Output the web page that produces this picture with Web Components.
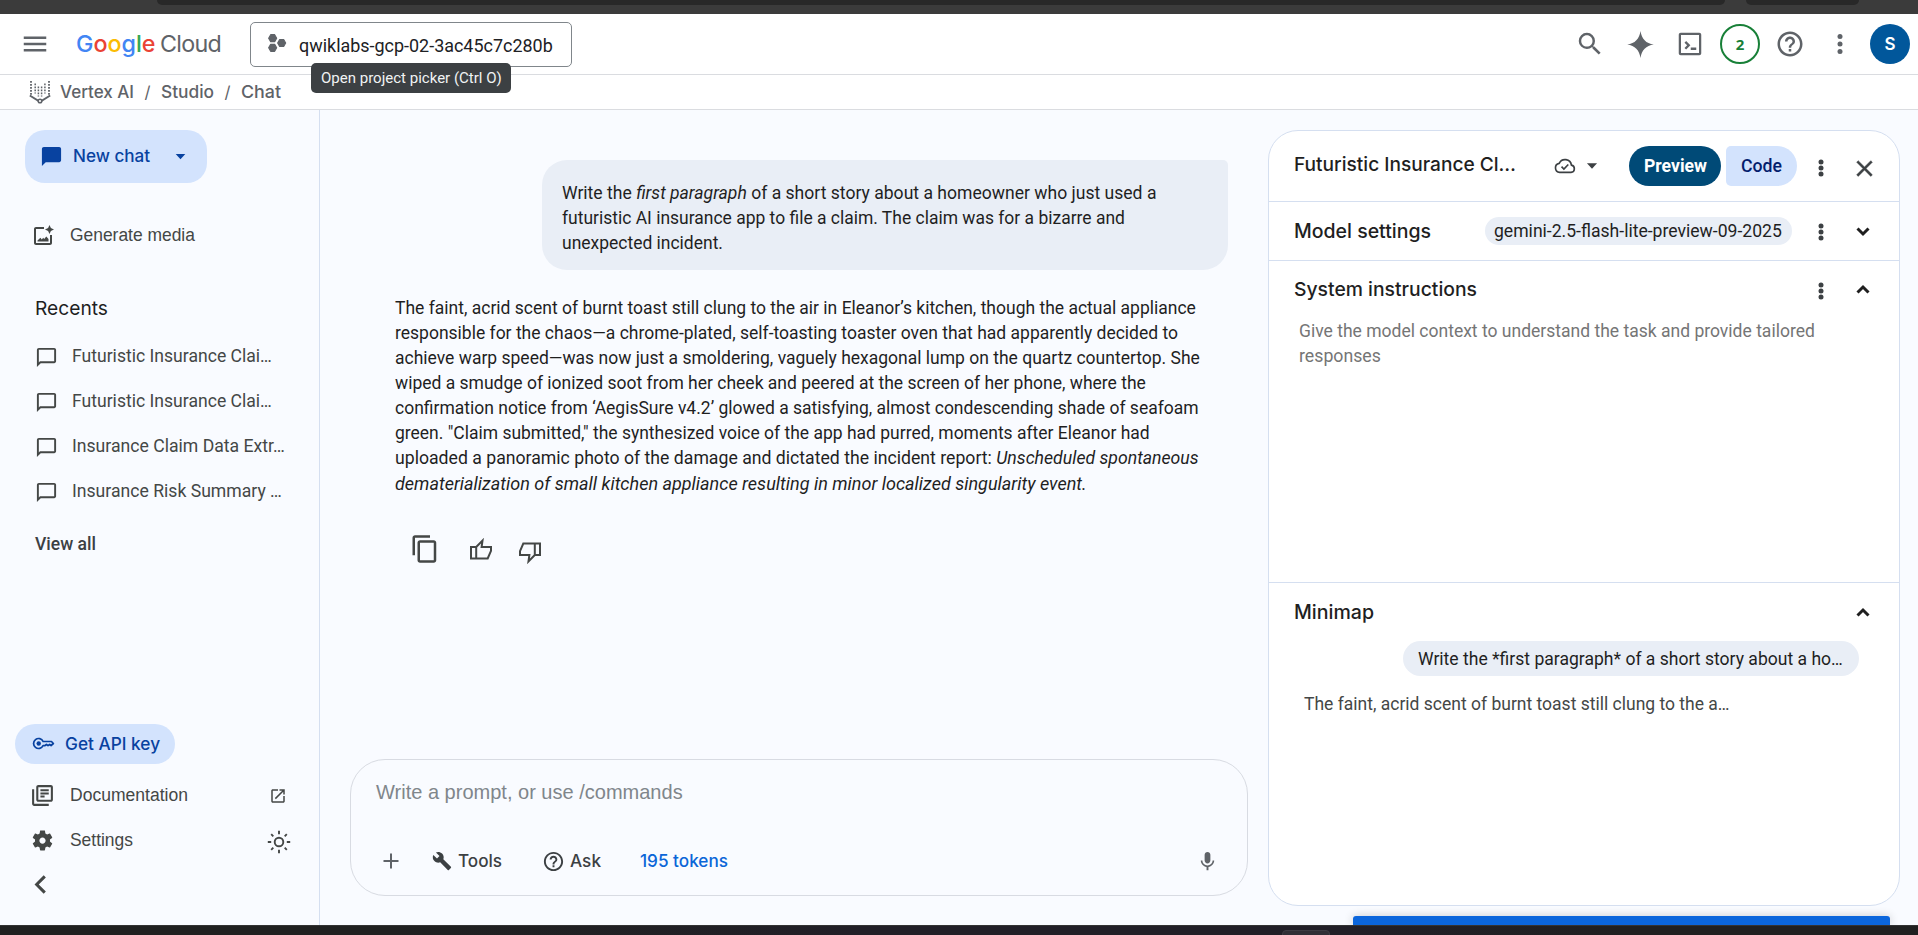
<!DOCTYPE html>
<html lang="en">
<head>
<meta charset="utf-8">
<title>Vertex AI Studio</title>
<style>
html,body{margin:0;height:100%;overflow:hidden;background:#f9fbff}
body{font-family:Roboto,sans-serif;font-size:17.5px;color:#1f1f1f}
</style>
</head>
<body>
<studio-app></studio-app>
<script>
const ICONS = {
menu:'<path d="M3 18h18v-2H3v2zm0-5h18v-2H3v2zm0-7v2h18V6H3z"/>',
search:'<path d="M15.5 14h-.79l-.28-.27A6.47 6.47 0 0 0 16 9.5 6.5 6.5 0 1 0 9.5 16c1.61 0 3.09-.59 4.23-1.57l.27.28v.79l5 4.99L20.49 19l-4.99-5zm-6 0C7.01 14 5 11.99 5 9.5S7.01 5 9.5 5 14 7.01 14 9.5 11.99 14 9.5 14z"/>',
help:'<path d="M11 18h2v-2h-2v2zm1-16C6.48 2 2 6.48 2 12s4.48 10 10 10 10-4.48 10-10S17.52 2 12 2zm0 18c-4.41 0-8-3.59-8-8s3.59-8 8-8 8 3.59 8 8-3.59 8-8 8zm0-14c-2.21 0-4 1.79-4 4h2c0-1.1.9-2 2-2s2 .9 2 2c0 2-3 1.75-3 5h2c0-2.25 3-2.5 3-5 0-2.21-1.79-4-4-4z"/>',
more:'<circle cx="12" cy="6" r="2"/><circle cx="12" cy="12" r="2"/><circle cx="12" cy="18" r="2"/>',
moreBold:'<circle cx="12" cy="5.9" r="2.5"/><circle cx="12" cy="12" r="2.5"/><circle cx="12" cy="18.1" r="2.5"/>',
spark:'<path d="M12 .8C12.9 7.4 16.6 11.1 23 12 16.6 12.9 12.9 16.6 12 23.2 11.1 16.6 7.4 12.9 1 12 7.4 11.1 11.1 7.4 12 .8z"/>',
shell:'<path fill-rule="evenodd" d="M4.6 3h14.8c.9 0 1.6.7 1.6 1.6v14.8c0 .9-.7 1.6-1.6 1.6H4.6c-.9 0-1.6-.7-1.6-1.6V4.6C3 3.7 3.7 3 4.6 3zM4.8 4.8v14.4h14.4V4.8zM7.6 10.9 9.7 13l-2.1 2.1 1.3 1.3 3.400-3.400-3.400-3.400zM12.600 14.800h4.400v1.900h-4.400z"/>',
chat:'<path d="M20 2H4c-1.1 0-2 .9-2 2v18l4-4h14c1.1 0 2-.9 2-2V4c0-1.1-.9-2-2-2z"/>',
chatOut:'<path d="M4 4h16v12H5.17L4 17.17V4m0-2c-1.1 0-2 .9-2 2v18l4-4h14c1.1 0 2-.9 2-2V4c0-1.1-.9-2-2-2H4z"/>',
down:'<path d="M6.5 9h11L12 15z"/>',
media:'<path d="M13 3H5c-1.1 0-2 .9-2 2v14c0 1.1.9 2 2 2h14c1.1 0 2-.9 2-2v-8h-2v8H5V5h8zM6.5 17.5h11V15l-2.2-2.6-2.1 2.6-1-1.2-1.4 1.7-1.4-1.7-2.9 2.7zM18.5 1l1.4 3.1L23 5.500l-3.100 1.400L18.500 10l-1.400-3.100L14 5.500l3.100-1.400z"/>',
key:'<g fill="none" stroke="currentColor" stroke-width="1.8"><path d="M11.600 9.900A5.200 5.200 0 1 0 11.600 14.100H13.600L15.100 13l1.600 1.200 1.700-1.200 1.500 1.100L22.300 12 20.300 9.900z" stroke-linejoin="round"/></g><circle cx="7" cy="12" r="2.300"/>',
docs:'<path d="M4 6H2v14c0 1.100.900 2 2 2h14v-2H4V6zm16-4H8c-1.100 0-2 .900-2 2v12c0 1.100.900 2 2 2h12c1.100 0 2-.900 2-2V4c0-1.100-.900-2-2-2zm0 14H8V4h12v12zM10 9h8v2h-8zm0 3h4v2h-4zm0-6h8v2h-8z"/>',
open:'<path d="M19 19H5V5h7V3H5c-1.110 0-2 .900-2 2v14c0 1.100.890 2 2 2h14c1.100 0 2-.900 2-2v-7h-2v7zM14 3v2h3.590l-9.830 9.830 1.410 1.410L19 6.410V10h2V3h-7z"/>',
gear:'<path d="M19.140 12.940c.040-.300.060-.610.060-.940 0-.320-.020-.640-.070-.940l2.030-1.580c.180-.140.230-.410.120-.610l-1.920-3.320c-.120-.220-.370-.290-.590-.220l-2.390.960c-.500-.380-1.030-.700-1.620-.940l-.360-2.540c-.040-.240-.240-.410-.480-.410h-3.840c-.240 0-.430.170-.470.410l-.360 2.540c-.590.240-1.130.570-1.620.940l-2.390-.960c-.220-.080-.470 0-.590.220L2.740 8.870c-.120.210-.080.470.120.610l2.030 1.580c-.050.300-.090.630-.090.940s.020.640.070.940l-2.030 1.580c-.180.140-.230.410-.120.610l1.920 3.320c.120.220.370.290.590.220l2.390-.960c.500.380 1.030.700 1.620.940l.360 2.540c.050.240.240.410.480.410h3.840c.240 0 .440-.170.470-.410l.360-2.540c.590-.240 1.130-.560 1.620-.940l2.390.960c.220.080.470 0 .590-.220l1.920-3.320c.120-.220.070-.470-.120-.610l-2.010-1.580zM12 15c-1.660 0-3-1.340-3-3s1.340-3 3-3 3 1.340 3 3-1.340 3-3 3z"/>',
sun:'<g fill="none" stroke="currentColor" stroke-width="1.900"><circle cx="12" cy="12" r="4.300"/><path d="M12 .800v3.400M12 19.800v3.400M.800 12h3.400M19.800 12h3.400M4.200 4.200l2.100 2.100M17.700 17.700l2.100 2.100M4.200 19.800l2.100-2.100M17.700 6.300l2.100-2.100"/></g>',
left:'<path d="M15.800 4.800 8.600 12l7.200 7.200" fill="none" stroke="currentColor" stroke-width="2.700"/>',
copy:'<path d="M16 1H4c-1.100 0-2 .900-2 2v14h2V3h12V1zm3 4H8c-1.100 0-2 .900-2 2v14c0 1.100.900 2 2 2h11c1.100 0 2-.900 2-2V7c0-1.100-.900-2-2-2zm0 16H8V7h11v14z"/>',
up:'<path d="M2 9h5.200v11.500H2zM7.200 9l6.300-6.400L12.600 9H22v3.800l-3.300 7.700H7.200" fill="none" stroke="currentColor" stroke-width="2"/>',
thumbDown:'<path transform="rotate(180 12 12)" d="M2 9h5.200v11.500H2zM7.200 9l6.300-6.400L12.600 9H22v3.800l-3.300 7.700H7.200" fill="none" stroke="currentColor" stroke-width="2"/>',
plus:'<path d="M19.500 13h-6.500v6.500h-2V13H4.500v-2H11V4.500h2V11h6.500z"/>',
wrench:'<path d="M22.700 19l-9.100-9.100c.900-2.300.400-5-1.500-6.900-2-2-5-2.400-7.400-1.300L9 6 6 9 1.600 4.700C.400 7.100.900 10.100 2.900 12.100c1.900 1.900 4.600 2.400 6.900 1.500l9.100 9.100c.400.400 1 .400 1.400 0l2.300-2.300c.500-.400.500-1.100.100-1.400z"/>',
mic:'<path d="M12 14c1.660 0 3-1.340 3-3V5c0-1.660-1.340-3-3-3S9 3.340 9 5v6c0 1.660 1.340 3 3 3zm5.300-3c0 3-2.540 5.100-5.300 5.100S6.700 14 6.700 11H5c0 3.410 2.720 6.230 6 6.720V21h2v-3.280c3.280-.480 6-3.300 6-6.720h-1.700z"/>',
close:'<path d="M19 6.410L17.590 5 12 10.590 6.410 5 5 6.410 10.590 12 5 17.590 6.410 19 12 13.410 17.590 19 19 17.590 13.410 12z" stroke="currentColor" stroke-width=".4"/>',
cloud:'<g fill="none" stroke="currentColor" stroke-width="1.800"><path d="M6.200 19H18.600A4 4 0 0 0 19 11.100 7 7 0 0 0 5.700 9.100 5 5 0 0 0 6.200 19z"/><path d="M8.200 12.700l2.600 2.600 4.800-4.900"/></g>',
expand:'<path d="M6.500 9.500 12 15l5.500-5.500" fill="none" stroke="currentColor" stroke-width="3"/>',
collapse:'<path d="M6.500 14.500 12 9l5.500 5.500" fill="none" stroke="currentColor" stroke-width="3"/>',
project:'<path stroke="currentColor" stroke-width="1.4" stroke-linejoin="round" d="M4.400 2h4.800l2.400 4.200-2.400 4.200H4.400L2 6.200zM4.400 13.600h4.800l2.400 4.200L9.200 22H4.400L2 17.800zM15.200 7.800H20l2.400 4.200-2.400 4.200h-4.800L12.800 12z"/>',
vertex:'<g fill="none" stroke="currentColor"><path d="M1.800 15.500 12 21.800l10.200-6.300" stroke-width="1.900"/><path d="M3 1v14M21 1v14" stroke-dasharray="1.800 1.200" stroke-width="1.800"/><path d="M7.200 3.500v10M10.400 6.500v10M13.600 6.500v10M16.900 3.500v10" stroke-dasharray="1.700 1.300" stroke-width="1.500"/><circle cx="12" cy="21" r="1.800" fill="#fff" stroke-width="1.500"/></g>'
};

/* One glyph from the icon set; "size" is its box in pixels. */
class AppIcon extends HTMLElement{
  connectedCallback(){
    if(this.shadowRoot) return;
    const s=this.getAttribute('size')||24;
    this.attachShadow({mode:'open'}).innerHTML=`<style>:host{display:block;flex:none;width:${s}px;height:${s}px}svg{display:block}</style><svg width="${s}" height="${s}" viewBox="0 0 24 24" fill="currentColor">${ICONS[this.getAttribute('name')]}</svg>`;
  }
}
customElements.define('app-icon',AppIcon);

/* A single line of text set to the width in "w": scaled a little, then tracked if still off. */
class FitText extends HTMLElement{
  connectedCallback(){
    if(this.shadowRoot) return;
    this.attachShadow({mode:'open'}).innerHTML='<style>:host{display:block;flex:none;white-space:pre}span{display:inline-block;vertical-align:top}</style><span><slot></slot></span>';
    const el=this.shadowRoot.querySelector('span'), w=+this.getAttribute('w');
    this.style.width=w+'px';
    const size=parseFloat(getComputedStyle(el).fontSize), width=()=>el.getBoundingClientRect().width;
    const k=Math.min(1.07,Math.max(.95,w/width()));
    el.style.fontSize=(size*k).toFixed(3)+'px';
    const rest=w-width();
    if(Math.abs(rest)>1.5) el.style.letterSpacing=(rest/this.textContent.length).toFixed(3)+'px';
  }
}
customElements.define('fit-text',FitText);

const define=(name,html)=>customElements.define(name,class extends HTMLElement{
  connectedCallback(){ if(!this.shadowRoot) this.attachShadow({mode:'open'}).innerHTML='<style>*{box-sizing:border-box}.g{font-family:Inter,sans-serif}.a{font-family:"Liberation Sans",Arial,sans-serif}</style>'+html; }
});

define('browser-edge',`<style>
:host{display:flex;height:14px;background:#3b3b3b;padding-left:157px;gap:21px}
i{display:block;height:5px;width:1568px;background:#282828;border-radius:0 0 12px 12px}
i+i{width:113px}
</style><i></i><i></i>`);

define('top-bar',`<style>
:host{display:flex;align-items:center;height:61px;box-sizing:border-box;border-bottom:1px solid #dadce0;background:#fff;padding:0 8px 0 20px;color:#5f6368}
.logo{margin-left:26px;font:500 24.500px/30px Inter,sans-serif;display:flex;gap:6px}
.logo fit-text+fit-text{color:#5f6368;font-weight:400}
.pick{position:relative;display:flex;align-items:center;width:322px;height:45px;margin-left:29px;border:1px solid #80868b;border-radius:5px;padding-left:16px;color:#202124}
.pick app-icon{color:#5f6368;margin:-2px 12px 0 0}
.pick>fit-text{margin-top:2px}
.tip{position:absolute;left:60px;top:40px;width:200px;height:30px;border-radius:5px;background:#3c4043;color:#f1f3f4;font-size:15px;line-height:30px;padding-left:10px;z-index:3}
.act{margin-left:auto;display:grid;grid-template-columns:repeat(7,50px);justify-items:center;align-items:center;width:345px}
.ring,.av{width:40px;height:40px;border-radius:50%;display:grid;place-items:center;font-weight:700;font-size:16px}
.ring{border:2.5px solid #188038;color:#188038;font:700 15px "Open Sans",sans-serif;padding-bottom:1px}
.av{background:#01579b;color:#fff;font:600 17px Inter,sans-serif}
</style>
<app-icon name="menu" size="30"></app-icon>
<div class="logo"><fit-text w="78"><span style="color:#4285f4">G</span><span style="color:#ea4335">o</span><span style="color:#fbbc04">o</span><span style="color:#4285f4">g</span><span style="color:#34a853">l</span><span style="color:#ea4335">e</span></fit-text><fit-text w="61">Cloud</fit-text></div>
<div class="pick"><app-icon name="project" size="20"></app-icon><fit-text w="254">qwiklabs-gcp-02-3ac45c7c280b</fit-text><div class="tip"><fit-text w="181">Open project picker (Ctrl O)</fit-text></div></div>
<div class="act"><app-icon name="search" size="30"></app-icon><app-icon name="spark" size="29"></app-icon><app-icon name="shell" size="30"></app-icon><div class="ring">2</div><app-icon name="help" size="30"></app-icon><app-icon name="more" size="30"></app-icon><div class="av">S</div></div>`);

define('bread-crumb',`<style>
:host{display:flex;align-items:center;height:35px;box-sizing:border-box;border-bottom:1px solid #dadce0;background:#fff;padding-left:28px;color:#5f6368;font:500 16.700px/20px Inter,sans-serif}
app-icon{margin-right:8px}
.s{width:27px;text-align:center;font-weight:400}
</style><app-icon name="vertex" size="24"></app-icon><fit-text w="74">Vertex AI</fit-text><div class="s">/</div><fit-text w="53">Studio</fit-text><div class="s">/</div><fit-text w="40">Chat</fit-text>`);

define('nav-item',`<style>:host{display:flex;align-items:center;height:45px;color:#444746}</style><slot></slot>`);

define('side-nav',`<style>
:host{display:flex;flex-direction:column;width:320px;box-sizing:border-box;border-right:1px solid #d5dff0;color:#444746}
.new{display:flex;align-items:center;width:182px;height:53px;border-radius:20px;background:#d3e3fd;color:#0842a0;margin:20px 0 0 25px;padding:0 9px 1px 15px;font:500 16.800px/22px Inter,sans-serif}
.new fit-text{margin:0 20px 0 10px}
nav-item.m{margin:30px 0 0 31px}
h2{font:400 19px/26px Inter,sans-serif;color:#1f1f1f;margin:37px 0 12px 35px}
nav-item.r{padding-left:35px}
nav-item.r app-icon{margin-top:3px}
.r fit-text{margin-left:14px}
.all{font-weight:500;margin:20px 0 0 35px;line-height:22px;color:#3c4043}
.bot{margin-top:auto;padding-bottom:20px}
.key{display:flex;align-items:center;width:160px;height:40px;border-radius:20px;background:#d3e3fd;color:#0842a0;margin:0 0 9px 15px;padding:0 0 1px 17px;gap:10px;font:500 16.800px/22px Inter,sans-serif}
.b{padding-left:30px}
</style>
<div class="new"><app-icon name="chat" size="23"></app-icon><fit-text w="77">New chat</fit-text><app-icon name="down" size="21"></app-icon></div>
<nav-item class="m"><app-icon name="media" size="24"></app-icon><fit-text class="a" w="125" style="margin-left:15px">Generate media</fit-text></nav-item>
<h2><fit-text w="73">Recents</fit-text></h2>
<nav-item class="r"><app-icon name="chatOut" size="23"></app-icon><fit-text w="200">Futuristic Insurance Clai…</fit-text></nav-item>
<nav-item class="r"><app-icon name="chatOut" size="23"></app-icon><fit-text w="200">Futuristic Insurance Clai…</fit-text></nav-item>
<nav-item class="r"><app-icon name="chatOut" size="23"></app-icon><fit-text w="213">Insurance Claim Data Extr…</fit-text></nav-item>
<nav-item class="r"><app-icon name="chatOut" size="23"></app-icon><fit-text w="210">Insurance Risk Summary …</fit-text></nav-item>
<div class="all"><fit-text w="61">View all</fit-text></div>
<div class="bot">
<div class="key"><app-icon name="key" size="23"></app-icon><fit-text w="95">Get API key</fit-text></div>
<nav-item class="b"><app-icon name="docs" size="25"></app-icon><fit-text class="a" w="118" style="margin-left:15px">Documentation</fit-text><app-icon name="open" size="18" style="margin-left:81px"></app-icon></nav-item>
<nav-item class="b"><app-icon name="gear" size="25"></app-icon><fit-text class="a" w="63" style="margin-left:15px">Settings</fit-text><app-icon name="sun" size="24" style="margin:3px 0 0 134px"></app-icon></nav-item>
<nav-item class="b" style="height:42px"><app-icon name="left" size="27" style="margin-left:-3px"></app-icon></nav-item>
</div>`);

define('chat-bubble',`<style>:host{display:block;box-sizing:border-box;background:#e9eef6;border-radius:25px 5px 25px 25px;width:686px;height:110px;margin-left:auto;padding:21px 20px 0;line-height:25px}</style><slot></slot>`);

define('prompt-box',`<style>
:host{display:flex;flex-direction:column;box-sizing:border-box;height:137px;border:1px solid #d8dbe2;border-radius:35px;padding:20px 28px 0 25px;color:#3c4043}
.ph{font-size:20px;line-height:25px;color:#80868b}
.row{display:flex;align-items:center;height:30px;margin-top:41px;padding-left:3px;font:500 16.800px/22px Inter,sans-serif}
</style><div class="ph a"><fit-text w="307">Write a prompt, or use /commands</fit-text></div>
<div class="row"><app-icon name="plus" size="24" style="color:#5f6368"></app-icon><app-icon name="wrench" size="20" style="margin:0 6px 0 29px"></app-icon><fit-text w="44">Tools</fit-text><app-icon name="help" size="23" style="margin:0 5px 0 40px"></app-icon><fit-text w="31">Ask</fit-text><fit-text w="88" style="margin-left:39px;color:#0b66d8">195 tokens</fit-text><app-icon name="mic" size="23" style="margin-left:auto;color:#5f6368"></app-icon></div>`);

define('chat-pane',`<style>
:host{display:flex;flex-direction:column;flex:1;box-sizing:border-box;padding:50px 20px 29px 30px}
chat-bubble{margin-right:20px}
.ans{margin:26px 0 0 45px;line-height:25px}
.tools{display:flex;margin:38px 0 0 60px;color:#444746}
prompt-box{margin-top:auto}
</style>
<chat-bubble><fit-text w="595">Write the <i>first paragraph</i> of a short story about a homeowner who just used a</fit-text><fit-text w="563">futuristic AI insurance app to file a claim. The claim was for a bizarre and</fit-text><fit-text w="161">unexpected incident.</fit-text></chat-bubble>
<div class="ans">
<fit-text w="801">The faint, acrid scent of burnt toast still clung to the air in Eleanor’s kitchen, though the actual appliance</fit-text>
<fit-text w="783">responsible for the chaos—a chrome-plated, self-toasting toaster oven that had apparently decided to</fit-text>
<fit-text w="805">achieve warp speed—was now just a smoldering, vaguely hexagonal lump on the quartz countertop. She</fit-text>
<fit-text w="751">wiped a smudge of ionized soot from her cheek and peered at the screen of her phone, where the</fit-text>
<fit-text w="804">confirmation notice from ‘AegisSure v4.2’ glowed a satisfying, almost condescending shade of seafoam</fit-text>
<fit-text w="755">green. "Claim submitted," the synthesized voice of the app had purred, moments after Eleanor had</fit-text>
<fit-text w="804">uploaded a panoramic photo of the damage and dictated the incident report: <i>Unscheduled spontaneous</i></fit-text>
<fit-text w="692"><i>dematerialization of small kitchen appliance resulting in minor localized singularity event.</i></fit-text>
</div>
<div class="tools"><app-icon name="copy" size="30"></app-icon><app-icon name="up" size="24" style="margin:4px 0 0 29px"></app-icon><app-icon name="thumbDown" size="24" style="margin:6px 0 0 25px"></app-icon></div>
<prompt-box></prompt-box>`);

define('panel-row',`<style>:host{display:flex;align-items:center;box-sizing:border-box;padding:0 22px 0 25px}</style><slot></slot>`);

define('settings-panel',`<style>
:host{display:flex;flex-direction:column;width:632px;height:776px;margin:20px 18px 0 0;box-sizing:border-box;border:1px solid #d5dff0;border-radius:30px;background:#fff}
h3{font:500 19.200px/26px Inter,sans-serif;margin:0;color:#1f1f1f}
.hd{height:71px;border-bottom:1px solid #d5dff0}
.ms{height:59px;border-bottom:1px solid #d5dff0}
.si{height:322px;border-bottom:1px solid #d5dff0}
panel-row{color:#3c4043}
.seg{display:flex;gap:5px;font-weight:500;font-size:17.500px;line-height:41px}
.seg div{height:40px;padding-left:15px;background:#d3e3fd;border-radius:5px 20px 20px 5px;width:71px;color:#041e6e}
.seg div:first-child{width:92px;background:#004a77;color:#fff;border-radius:20px;font-weight:700}
.chip{background:#e9eef6;border-radius:14px;height:28px;line-height:29px;padding-left:9px;width:307px;margin-left:auto;color:#1f1f1f}
.hint{margin:1px 0 0 30px;line-height:25px;color:#757575}
.bub{margin:0 40px 0 auto;width:456px;height:35px;line-height:36px;border-radius:18px;background:#e9eef6;padding-left:15px}
.ans{margin:17px 0 0 35px;line-height:22px;color:#444746}
.x{color:#1f1f1f}
</style>
<panel-row class="hd"><h3 style="margin-top:-5px"><fit-text w="222">Futuristic Insurance Cl…</fit-text></h3><app-icon name="cloud" size="22" style="margin:0 0 0 38px"></app-icon><app-icon name="down" size="22" style="margin:0 26px 0 5px"></app-icon><div class="seg"><div><fit-text w="63">Preview</fit-text></div><div><fit-text w="41">Code</fit-text></div></div><app-icon name="moreBold" size="24" style="margin:4px 0 0 12px"></app-icon><app-icon name="close" size="27" style="margin:4px -1px 0 auto"></app-icon></panel-row>
<panel-row class="ms"><h3><fit-text w="137">Model settings</fit-text></h3><div class="chip"><fit-text w="288">gemini-2.5-flash-lite-preview-09-2025</fit-text></div><app-icon name="moreBold" size="24" style="margin:2px 0 0 17px"></app-icon><app-icon class="x" name="expand" size="24" style="margin:0 2px 0 18px"></app-icon></panel-row>
<div class="si"><panel-row style="height:57px"><h3 style="margin-top:-1px"><fit-text w="183">System instructions</fit-text></h3><app-icon name="moreBold" size="24" style="margin:3px 0 0 auto"></app-icon><app-icon class="x" name="collapse" size="24" style="margin:0 2px 0 18px"></app-icon></panel-row>
<div class="hint"><fit-text w="516">Give the model context to understand the task and provide tailored</fit-text><fit-text w="82">responses</fit-text></div></div>
<panel-row style="height:58px"><h3><fit-text w="80">Minimap</fit-text></h3><app-icon class="x" name="collapse" size="24" style="margin:2px 2px 0 auto"></app-icon></panel-row>
<div class="bub"><fit-text w="425">Write the *first paragraph* of a short story about a ho…</fit-text></div>
<div class="ans"><fit-text w="426">The faint, acrid scent of burnt toast still clung to the a…</fit-text></div>`);

define('studio-app',`<style>
:host{display:flex;flex-direction:column;height:935px;width:1918px;position:relative;overflow:hidden;background:#f9fbff}
main{display:flex;height:815px}
.snack{position:absolute;left:1353px;top:916px;width:537px;height:9px;background:#0b66dc;border-radius:3px 3px 0 0;box-shadow:0 0 10px #0003}
.task{display:flex;height:10px;background:linear-gradient(90deg,#202020 20%,#211f27 45%,#211f27 70%,#202020 85%);border-top:1px solid #333;position:relative;padding:4px 0 0 1282px}
.task i{width:48px;height:8px;border-radius:4px 4px 0 0;background:#302e35;border:1px solid #3d3b42}
</style><browser-edge></browser-edge><top-bar></top-bar><bread-crumb></bread-crumb>
<main><side-nav></side-nav><chat-pane></chat-pane><settings-panel></settings-panel></main>
<div class="snack"></div><div class="task"><i></i></div>`);
</script>
</body>
</html>
